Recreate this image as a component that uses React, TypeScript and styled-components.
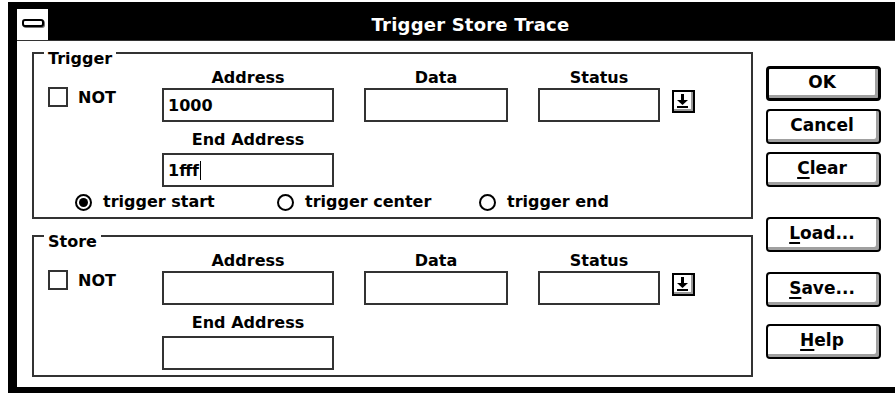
import React from 'react';
import styled, { createGlobalStyle } from 'styled-components';

const Global = createGlobalStyle`
  html, body { margin: 0; padding: 0; background: #fff; overflow: hidden; }
  body { font-family: "DejaVu Sans", "Liberation Sans", sans-serif; font-weight: bold; color: #000; }
  #root { width: 895px; height: 394px; overflow: hidden; }
  * { box-sizing: border-box; }
`;

const Window = styled.div`
  margin: 2px 0 0 8px;
  width: 887px;
  border-left: 9px solid #000;
  border-top: 7px solid #000;
  border-bottom: 6px solid #000;
  display: flex;
  flex-direction: column;
`;

const TitleBar = styled.div`
  display: flex;
  height: 32px;
  border-bottom: 1px solid #333;
`;

const SysMenu = styled.div`
  width: 31px;
  background: #fff;
  display: flex;
  align-items: center;
  justify-content: center;
`;

const SysBar = styled.div`
  width: 22px;
  height: 8px;
  border: 2px solid #000;
  border-radius: 3px;
  background: #fff;
  box-shadow: 1px 1px 0 #777;
  margin-bottom: 3px;
`;

const Title = styled.div`
  flex: 1;
  background: #000;
  color: #fff;
  font-size: 18px;
  display: flex;
  align-items: center;
  justify-content: center;
  padding-right: 2px;
  letter-spacing: 0.2px;
`;

const Body = styled.div`
  display: flex;
  gap: 13px;
  padding: 11px 0 10px 15px;
  background: #fff;
`;

const Groups = styled.div`
  display: flex;
  flex-direction: column;
  gap: 16px;
`;

const GroupBox = styled.div<{ $pb: number }>`
  position: relative;
  width: 721px;
  border: 2px solid #333;
  padding: 15px 0 ${p => p.$pb}px 14px;
`;

const Legend = styled.span`
  position: absolute;
  left: 10px;
  top: -4px;
  padding: 0 4px;
  background: #fff;
  font-size: 16px;
  line-height: 18px;
`;

const FieldGrid = styled.div`
  display: grid;
  grid-template-columns: 114px 172px 30px 144px 30px 122px 12px 23px;
  grid-template-rows: 19px 34px 27px 38px;
`;

const Header = styled.div<{ $col: number; $row: number }>`
  grid-column: ${p => p.$col};
  grid-row: ${p => p.$row};
  align-self: ${p => (p.$row === 1 ? 'start' : 'end')};
  text-align: center;
  font-size: 16px;
  line-height: 18px;
  white-space: nowrap;
`;

const TextBox = styled.div<{ $col: number; $row: number }>`
  grid-column: ${p => p.$col};
  grid-row: ${p => p.$row};
  align-self: ${p => (p.$row === 2 ? 'start' : 'end')};
  height: 34px;
  border: 2px solid #333;
  background: #fff;
  display: flex;
  align-items: center;
  padding-left: 4px;
  font-size: 16px;
`;

const Caret = styled.span`
  display: inline-block;
  width: 1px;
  height: 19px;
  background: #000;
  margin-left: 1px;
`;

const CheckRow = styled.label`
  grid-column: 1;
  grid-row: 2;
  align-self: start;
  display: flex;
  align-items: center;
  gap: 10px;
  margin-top: -1px;
  font-size: 16px;
`;

const CheckBox = styled.span`
  width: 20px;
  height: 20px;
  border: 2px solid #333;
  background: #fff;
`;

const DropButton = styled.div`
  grid-column: 8;
  grid-row: 2;
  align-self: start;
  margin-top: 2px;
  width: 23px;
  height: 23px;
  border: 2px solid #000;
  background: #fff;
  box-shadow: inset -2px -2px 0 #999;
  display: flex;
  align-items: center;
  justify-content: center;
  padding: 0 2px 2px 0;
`;

const RadioRow = styled.div`
  display: flex;
  margin-top: 6px;
  padding-left: 27px;
`;

const RadioItem = styled.label`
  width: 202px;
  display: flex;
  align-items: center;
  gap: 11px;
  font-size: 16px;
  line-height: 18px;
`;

const RadioCircle = styled.span<{ $on?: boolean }>`
  width: 17px;
  height: 17px;
  border: 2px solid #000;
  border-radius: 50%;
  display: flex;
  align-items: center;
  justify-content: center;
  &::after {
    content: '';
    width: 9px;
    height: 9px;
    border-radius: 50%;
    background: ${p => (p.$on ? '#000' : 'transparent')};
  }
`;

const ButtonColumn = styled.div`
  display: flex;
  flex-direction: column;
  padding-top: 14px;
`;

const PushButton = styled.button<{ $default?: boolean; $mt: number }>`
  width: 115px;
  height: 35px;
  margin-top: ${p => p.$mt}px;
  border: ${p => (p.$default ? 3 : 2)}px solid #000;
  border-radius: 4px;
  background: #fff;
  box-shadow: inset -3px -3px 0 #a0a0a0;
  font-family: "DejaVu Sans", "Liberation Sans", sans-serif;
  font-weight: bold;
  font-size: 17px;
  color: #000;
  padding: 0 3px 3px 0;
  u { text-decoration-thickness: 2px; text-underline-offset: 3px; }
`;

const DownArrow = () => (
  <svg width="15" height="15" viewBox="0 0 15 15">
    <rect x="6" y="1" width="3" height="6" fill="#000" />
    <polygon points="2,7 13,7 7.5,12" fill="#000" />
    <rect x="2" y="13" width="11" height="2" fill="#000" />
  </svg>
);

type FieldsProps = { address?: string; endAddress?: string };

const Fields: React.FC<FieldsProps> = ({ address, endAddress }) => (
  <FieldGrid>
    <Header $col={2} $row={1}>Address</Header>
    <Header $col={4} $row={1}>Data</Header>
    <Header $col={6} $row={1}>Status</Header>
    <CheckRow>
      <CheckBox />
      NOT
    </CheckRow>
    <TextBox $col={2} $row={2}>{address}</TextBox>
    <TextBox $col={4} $row={2} />
    <TextBox $col={6} $row={2} />
    <DropButton>
      <DownArrow />
    </DropButton>
    <Header $col={2} $row={3}>End Address</Header>
    <TextBox $col={2} $row={4}>
      {endAddress}
      {endAddress !== undefined && <Caret />}
    </TextBox>
  </FieldGrid>
);

export default function App() {
  return (
    <>
      <Global />
      <Window>
        <TitleBar>
          <SysMenu>
            <SysBar />
          </SysMenu>
          <Title>Trigger Store Trace</Title>
        </TitleBar>
        <Body>
          <Groups>
            <GroupBox $pb={6}>
              <Legend>Trigger</Legend>
              <Fields address="1000" endAddress="1fff" />
              <RadioRow>
                <RadioItem>
                  <RadioCircle $on />
                  trigger start
                </RadioItem>
                <RadioItem>
                  <RadioCircle />
                  trigger center
                </RadioItem>
                <RadioItem>
                  <RadioCircle />
                  trigger end
                </RadioItem>
              </RadioRow>
            </GroupBox>
            <GroupBox $pb={5}>
              <Legend>Store</Legend>
              <Fields />
            </GroupBox>
          </Groups>
          <ButtonColumn>
            <PushButton $default $mt={0}>OK</PushButton>
            <PushButton $mt={8}>Cancel</PushButton>
            <PushButton $mt={8}><u>C</u>lear</PushButton>
            <PushButton $mt={30}><u>L</u>oad...</PushButton>
            <PushButton $mt={20}><u>S</u>ave...</PushButton>
            <PushButton $mt={17}><u>H</u>elp</PushButton>
          </ButtonColumn>
        </Body>
      </Window>
    </>
  );
}
